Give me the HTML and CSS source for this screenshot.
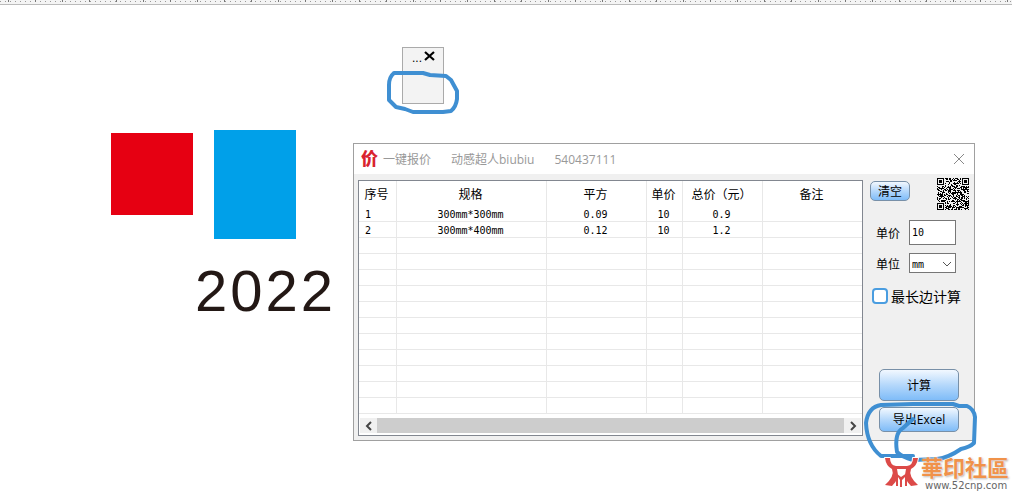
FILE: index.html
```html
<!DOCTYPE html>
<html lang="zh-CN">
<head>
    <meta charset="UTF-8">
    <meta name="viewport" content="width=device-width, initial-scale=1.0">
    <title>一键报价</title>
    <link rel="stylesheet" href="styles.css">
</head>
<body>

<div class="ruler"></div>

<div class="canvas">
    <!-- Artwork -->
    <div class="shape red"></div>
    <div class="shape blue"></div>
    <div class="year">2022</div>

    <!-- Docked mini panel -->
    <div class="mini">
        <span class="dots">...</span>
        <button class="mini-close" aria-label="关闭">
            <svg width="12" height="10" viewBox="0 0 12 10"><path d="M1 1L10 9M10 1L1 9" stroke="#000" stroke-width="2.2" fill="none"/></svg>
        </button>
    </div>

    <!-- Quote window -->
    <div class="dialog">
        <div class="titlebar">
            <span class="logo">价</span>
            <span>一键报价</span>
            <span class="author">动感超人biubiu</span>
            <span class="qq">540437111</span>
            <button class="close" aria-label="关闭">
                <svg width="12" height="12" viewBox="0 0 12 12"><path d="M1 1L11 11M11 1L1 11" stroke="#888" fill="none"/></svg>
            </button>
        </div>
        <div class="content">
            <div class="list">
                <table>
                    <colgroup>
                        <col class="c-no"><col class="c-size"><col class="c-area"><col class="c-price"><col class="c-total"><col>
                    </colgroup>
                    <thead>
                        <tr><th>序号</th><th>规格</th><th>平方</th><th>单价</th><th>总价（元）</th><th>备注</th></tr>
                    </thead>
                    <tbody>
                        <tr><td>1</td><td>300mm*300mm</td><td>0.09</td><td>10</td><td>0.9</td><td></td></tr>
                        <tr><td>2</td><td>300mm*400mm</td><td>0.12</td><td>10</td><td>1.2</td><td></td></tr>
                        <tr><td></td><td></td><td></td><td></td><td></td><td></td></tr>
                        <tr><td></td><td></td><td></td><td></td><td></td><td></td></tr>
                        <tr><td></td><td></td><td></td><td></td><td></td><td></td></tr>
                        <tr><td></td><td></td><td></td><td></td><td></td><td></td></tr>
                        <tr><td></td><td></td><td></td><td></td><td></td><td></td></tr>
                        <tr><td></td><td></td><td></td><td></td><td></td><td></td></tr>
                        <tr><td></td><td></td><td></td><td></td><td></td><td></td></tr>
                        <tr><td></td><td></td><td></td><td></td><td></td><td></td></tr>
                        <tr><td></td><td></td><td></td><td></td><td></td><td></td></tr>
                        <tr><td></td><td></td><td></td><td></td><td></td><td></td></tr>
                        <tr><td></td><td></td><td></td><td></td><td></td><td></td></tr>
                    </tbody>
                </table>
                <div class="scrollbar">
                    <button aria-label="向左"><svg width="8" height="10" viewBox="0 0 8 10"><path d="M6 1L2 5L6 9" stroke="#444" stroke-width="2" fill="none"/></svg></button>
                    <div class="thumb"></div>
                    <button aria-label="向右"><svg width="8" height="10" viewBox="0 0 8 10"><path d="M2 1L6 5L2 9" stroke="#444" stroke-width="2" fill="none"/></svg></button>
                </div>
            </div>
            <div class="side">
                <div class="side-top">
                    <button class="btn clear">清空</button>
                    <svg class="qr" id="qr" width="32" height="32" viewBox="0 0 32 32" shape-rendering="crispEdges"></svg>
                </div>
                <div class="field">
                    <label for="price">单价</label>
                    <input type="text" id="price" value="10">
                </div>
                <div class="field">
                    <label for="unit">单位</label>
                    <div class="select">
                        <select id="unit"><option>mm</option><option>cm</option><option>m</option></select>
                        <svg width="10" height="6" viewBox="0 0 10 6"><path d="M1 1L5 5L9 1" stroke="#555" fill="none"/></svg>
                    </div>
                </div>
                <div class="check">
                    <input type="checkbox" id="longest">
                    <label for="longest">最长边计算</label>
                </div>
                <div class="actions">
                    <button class="btn calc">计算</button>
                    <button class="btn export">导出Excel</button>
                </div>
            </div>
        </div>
    </div>

    <!-- Pen marks -->
    <svg class="mark mark-top" width="76" height="48" viewBox="0 0 76 48"><path d="M9 6L38 6L45 8L61 9L66 13L72 24L72 32Q71 40 66 44L58 45L28 45L20 42L11 40L4 33L4 18Q4 10 9 6"/></svg>
    <svg class="mark mark-bottom" width="118" height="64" viewBox="0 0 118 64"><path d="M50 57L18 57Q4 46 3 24Q5 8 18 6L50 5L90 5L96 7L104 7Q111 10 112 18L111 44Q107 48 98 50Q85 59 74 60L50 61Q39 58 34 53Q31 34 40 29L50 20"/></svg>

    <!-- Site stamp -->
    <div class="stamp">
        <svg width="38" height="33" viewBox="0 0 38 33">
            <g fill="#dc4a48" stroke="#fff" stroke-width="2" paint-order="stroke" stroke-linejoin="round">
                <path d="M2 2L7 2Q7 9 13 10H24Q30 9 30 2L35 2Q34 10 28 13Q25 20 35 29L28 30Q20 23 23 13H14Q17 23 9 30L2 29Q12 20 9 13Q3 10 2 2Z"/>
                <path d="M13 30V17L18 21L24 17V30H22V21L19 24V31H17V24L15 21V30Z" stroke="none"/>
            </g>
        </svg>
        <div class="stamp-text">
            <div class="stamp-name">華印社區</div>
            <div class="stamp-url">www.52cnp.com</div>
        </div>
    </div>
</div>

<script src="script.js"></script>
</body>
</html>
```
FILE: styles.css
```css
* {
    box-sizing: border-box;
}
body {
    margin: 0;
    min-height: 100vh;
    background-color: #fff;
    font-family: "Liberation Sans", "Noto Sans CJK SC", sans-serif;
    font-size: 12px;
    color: #000;
    overflow: hidden;
}
button {
    padding: 0;
    border: 0;
    background: none;
    font: inherit;
    color: inherit;
}
svg {
    display: block;
}
.ruler {
    height: 5px;
    border-bottom: 1px solid #bbb;
    background:
        repeating-linear-gradient(90deg, transparent 0 8px, #777 8px 9px, transparent 9px 27px) 0 0 / 100% 2px no-repeat,
        repeating-linear-gradient(90deg, #999 0 1px, #f4f4f4 1px 5px) 0 1px / 100% 1px no-repeat,
        #f4f4f4;
}
.canvas {
    position: relative;
    height: calc(100vh - 5px);
}
.shape {
    position: absolute;
    width: 82px;
}
.red {
    left: 111px;
    top: 128px;
    height: 82px;
    background-color: #e60012;
}
.blue {
    left: 214px;
    top: 125px;
    height: 109px;
    background-color: #00a0e9;
}
.year {
    position: absolute;
    left: 195px;
    top: 254px;
    font-size: 58px;
    line-height: 64px;
    letter-spacing: 3px;
    color: #231815;
}

/* mini panel */
.mini {
    position: absolute;
    left: 402px;
    top: 42px;
    width: 42px;
    height: 57px;
    padding: 3px 7px;
    display: flex;
    justify-content: flex-end;
    align-items: flex-start;
    gap: 2px;
    border: 1px solid #aaa;
    background-color: #f3f3f3;
}
.dots {
    line-height: 14px;
}

/* dialog */
.dialog {
    position: absolute;
    left: 353px;
    top: 138px;
    width: 622px;
    border: 1px solid #a0a0a0;
    background-color: #f0f0f0;
}
.titlebar {
    display: flex;
    align-items: center;
    height: 30px;
    padding: 0 9px 0 7px;
    background-color: #fff;
    font-family: "Open Sans", "Noto Sans CJK SC", sans-serif;
    color: #999;
}
.logo {
    width: 22px;
    font-family: "Noto Sans CJK SC", sans-serif;
    font-size: 17px;
    font-weight: 900;
    line-height: 26px;
    padding-bottom: 2px;
    color: #d9232e;
}
.author,
.qq {
    margin-left: 20px;
}
.close {
    margin-left: auto;
}
.content {
    display: flex;
    padding: 6px 5px 4px 4px;
}
.list {
    flex: 1;
    border: 1px solid #828790;
    background-color: #fff;
}
table {
    width: 100%;
    table-layout: fixed;
    border-collapse: separate;
    border-spacing: 0;
}
.c-no { width: 38px; }
.c-size { width: 150px; }
.c-area { width: 100px; }
.c-price { width: 36px; }
.c-total { width: 80px; }
th, td {
    padding: 0 2px 0 0;
    border-right: 1px solid #e8e8e8;
    text-align: center;
}
th {
    height: 25px;
    font-family: "Noto Sans CJK SC", sans-serif;
    font-weight: normal;
    line-height: 24px;
}
td {
    height: 16px;
    padding-top: 2px;
    border-bottom: 1px solid #e8e8e8;
    font-family: "DejaVu Sans Mono", monospace;
    font-size: 10px;
    line-height: 13px;
}
th:last-child, td:last-child {
    border-right: 0;
}
td:first-child {
    padding-left: 6px;
    text-align: left;
}
.scrollbar {
    display: flex;
    height: 15px;
    margin: 4px 1px 2px;
    background-color: #f0f0f0;
}
.scrollbar button {
    display: flex;
    width: 17px;
    align-items: center;
    justify-content: center;
}
.thumb {
    flex: 1;
    background-color: #cdcdcd;
}

/* right column */
.side {
    display: flex;
    flex-direction: column;
    width: 106px;
    padding-left: 7px;
    font-family: "Noto Sans CJK SC", sans-serif;
}
.side-top {
    display: flex;
    justify-content: space-between;
    height: 40px;
}
.qr {
    margin-top: -2px;
}
.btn {
    border: 1px solid #7890a8;
    border-radius: 5px;
    background: linear-gradient(#f2f8ff, #b5d8fb 50%, #7fbcf8);
}
.clear {
    width: 40px;
    height: 20px;
    margin-top: 1px;
    line-height: 18px;
}
.field {
    display: flex;
    align-items: center;
    gap: 9px;
    padding-left: 6px;
    margin-bottom: 8px;
}
.field label {
    width: 24px;
}
.field input,
.select {
    width: 47px;
    height: 25px;
    border: 1px solid #777;
    background-color: #fff;
}
.field input,
.field select {
    padding: 0 2px;
    font-family: "DejaVu Sans Mono", monospace;
    font-size: 10px;
    color: #000;
}
.select {
    position: relative;
    height: 20px;
}
.select select {
    width: 100%;
    height: 100%;
    border: 0;
    background: none;
    appearance: none;
}
.select svg {
    position: absolute;
    right: 3px;
    top: 7px;
    pointer-events: none;
}
.check {
    display: flex;
    align-items: center;
    gap: 3px;
    margin: 5px 0 0 2px;
    font-size: 14px;
    line-height: 20px;
    white-space: nowrap;
}
.check input {
    width: 16px;
    height: 16px;
    margin: 0;
    border: 2px solid #4a9de0;
    border-radius: 4px;
    background-color: #fff;
    appearance: none;
}
.actions {
    display: flex;
    flex-direction: column;
    gap: 6px;
    width: 80px;
    margin: auto 0 4px 9px;
}
.actions .btn {
    padding-bottom: 2px;
}
.calc {
    height: 32px;
}
.export {
    height: 25px;
    font-family: "Open Sans", "Noto Sans CJK SC", sans-serif;
}

/* overlays */
.mark {
    position: absolute;
    fill: none;
    stroke: #3f8fd2;
    stroke-width: 4px;
    stroke-linejoin: round;
    stroke-linecap: round;
}
.mark-top {
    left: 385px;
    top: 62px;
}
.mark-bottom {
    left: 863px;
    top: 394px;
}
.stamp {
    position: absolute;
    right: 3px;
    bottom: 1px;
    display: flex;
    align-items: center;
}
.stamp-name {
    font-family: "Noto Sans CJK TC", sans-serif;
    font-size: 22px;
    font-weight: bold;
    line-height: 28px;
    color: #f0924a;
    text-shadow: 0 0 2px #fff, 1px 1px 2px #aaa;
}
.stamp-url {
    padding-left: 4px;
    font-family: "DejaVu Sans", sans-serif;
    font-size: 10px;
    line-height: 12px;
    color: #666;
}
```
FILE: script.js
```javascript
// Build the contact code out of 1px modules
const qr = document.getElementById('qr');
const size = 32;
let seed = 540437111;
let d = '';

function finder(x, y) {
    return x >= 0 && x < 7 && y >= 0 && y < 7 &&
        (x === 0 || x === 6 || y === 0 || y === 6 || (x > 1 && x < 5 && y > 1 && y < 5));
}

for (let y = 0; y < size; y++) {
    for (let x = 0; x < size; x++) {
        seed = (seed * 1103 + 12345) % 2147483647;
        const corner = (x < 8 && y < 8) || (x > size - 9 && y < 8) || (x < 8 && y > size - 9);
        const dark = corner
            ? finder(x, y) || finder(x - size + 7, y) || finder(x, y - size + 7)
            : seed % 100 < 52;
        if (dark) {
            d += 'M' + x + ' ' + y + 'h1v1h-1z';
        }
    }
}

const path = document.createElementNS('http://www.w3.org/2000/svg', 'path');
path.setAttribute('d', d);
qr.appendChild(path);
```
